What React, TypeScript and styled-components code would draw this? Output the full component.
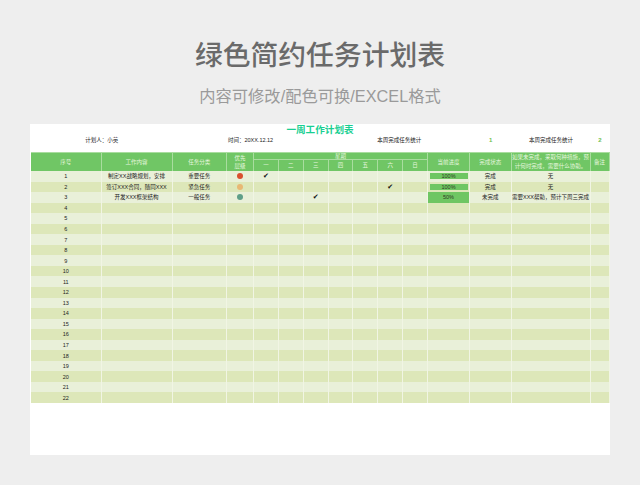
import React from "react";
import styled, { createGlobalStyle } from "styled-components";

const Global = createGlobalStyle`
  html, body { margin: 0; padding: 0; background: #eeeeee; }
  body { font-family: "Liberation Sans", "Noto Sans CJK SC", sans-serif; }
`;

const Page = styled.div`
  width: 640px;
  height: 485px;
  overflow: hidden;
  background: #eeeeee;
  display: flex;
  flex-direction: column;
  align-items: center;
`;

const Heading = styled.h1`
  margin: 34px 0 0;
  height: 44px;
  line-height: 44px;
  font-size: 27.8px;
  font-weight: 500;
  color: #6a6a6a;
`;

const SubHeading = styled.h2`
  margin: 6px 0 0;
  height: 24px;
  line-height: 24px;
  font-size: 16.3px;
  font-weight: 400;
  color: #9a9a9a;
`;

const Sheet = styled.section`
  margin-top: 16px;
  width: 580px;
  height: 331px;
  background: #ffffff;
  padding: 0 1px;
  box-sizing: border-box;
  display: flex;
  flex-direction: column;
`;

const SheetTitle = styled.div`
  height: 10px;
  line-height: 11px;
  text-align: center;
  font-size: 9.6px;
  font-weight: 700;
  color: #19cf92;
`;

const columns = "70.5px 71px 54.5px 27px repeat(7, 24.86px) 42px 41.5px 79px 19px";

const InfoRow = styled.div`
  height: 17.5px;
  padding-bottom: 5.5px;
  box-sizing: border-box;
  display: grid;
  grid-template-columns: ${columns};
  align-items: center;
`;

const Info = styled.div<{ $span: number; $accent?: boolean }>`
  grid-column: span ${(p) => p.$span};
  text-align: center;
  font-size: ${(p) => (p.$accent ? "6px" : "5.5px")};
  font-weight: ${(p) => (p.$accent ? 700 : 400)};
  color: ${(p) => (p.$accent ? "#6cc04f" : "#222222")};
`;

const Grid = styled.div`
  display: grid;
  grid-template-columns: ${columns};
  grid-template-rows: 7px 12.5px;
  grid-auto-rows: 10.55px;
`;

const HeadCell = styled.div<{ $rows?: number; $span?: number; $tight?: boolean }>`
  grid-row: span ${(p) => p.$rows ?? 1};
  grid-column: span ${(p) => p.$span ?? 1};
  background: #70c665;
  color: #e6f6df;
  box-sizing: border-box;
  border-right: 1px solid #a9dd9f;
  border-top: 1px solid #a9dd9f;
  display: flex;
  align-items: center;
  justify-content: center;
  text-align: center;
  font-size: 5.5px;
  line-height: ${(p) => (p.$tight ? "8.5px" : "8px")};
  overflow: hidden;
`;

const Cell = styled.div<{ $even: boolean }>`
  background: ${(p) => (p.$even ? "#dde7b9" : "#e9f0d9")};
  color: #222222;
  box-sizing: border-box;
  border-right: 1px solid #f1f5e4;
  display: flex;
  align-items: center;
  justify-content: center;
  white-space: nowrap;
  font-size: 5.5px;
  line-height: 10px;
  overflow: hidden;
`;

const Dot = styled.span<{ $color: string }>`
  flex: none;
  width: 6.2px;
  height: 6.2px;
  border-radius: 50%;
  background: ${(p) => p.$color};
`;

const Check = styled.span`
  font-family: "DejaVu Sans", sans-serif;
  font-size: 7px;
  color: #111111;
`;

const Bar = styled.div<{ $full: boolean }>`
  background: #6fc663;
  color: #2f3a22;
  display: flex;
  align-items: center;
  justify-content: center;
  width: ${(p) => (p.$full ? "100%" : "38px")};
  height: ${(p) => (p.$full ? "100%" : "6px")};
`;

type Row = {
  work?: string;
  kind?: string;
  dot?: string;
  day?: number;
  progress?: string;
  state?: string;
  help?: string;
};

const data: Row[] = [
  { work: "制定XX战略规划，安排", kind: "重要任务", dot: "#d9502e", day: 0, progress: "100%", state: "完成", help: "无" },
  { work: "签订XXX合同，随同XXX", kind: "紧急任务", dot: "#e8b874", day: 5, progress: "100%", state: "完成", help: "无" },
  { work: "开发XXX框架结构", kind: "一般任务", dot: "#5f9f88", day: 2, progress: "50%", state: "未完成", help: "需要XXX帮助，预计下周三完成" },
];
const rows: Row[] = Array.from({ length: 22 }, (_, i) => data[i] ?? {});
const days = ["一", "二", "三", "四", "五", "六", "日"];

export default function App() {
  return (
    <Page>
      <Global />
      <Heading>绿色简约任务计划表</Heading>
      <SubHeading>内容可修改/配色可换/EXCEL格式</SubHeading>
      <Sheet>
        <SheetTitle>一周工作计划表</SheetTitle>
        <InfoRow>
          <Info $span={2}>计划人：小英</Info>
          <Info $span={5}>时间：20XX.12.12</Info>
          <Info $span={5}>本周完成任务统计</Info>
          <Info $span={1} $accent>1</Info>
          <Info $span={1}>本周完成任务统计</Info>
          <Info $span={1} $accent>2</Info>
        </InfoRow>
        <Grid>
          <HeadCell $rows={2}>序号</HeadCell>
          <HeadCell $rows={2}>工作内容</HeadCell>
          <HeadCell $rows={2}>任务分类</HeadCell>
          <HeadCell $rows={2}>优先<br />层级</HeadCell>
          <HeadCell $span={7}>星期</HeadCell>
          <HeadCell $rows={2}>当前进度</HeadCell>
          <HeadCell $rows={2}>完成状态</HeadCell>
          <HeadCell $rows={2} $tight>如果未完成，采取何种措施，预计何时完成，需要什么协助。</HeadCell>
          <HeadCell $rows={2}>备注</HeadCell>
          {days.map((d) => (
            <HeadCell key={d}>{d}</HeadCell>
          ))}
          {rows.map((r, i) => {
            const even = i % 2 === 1;
            return (
              <React.Fragment key={i}>
                <Cell $even={even}>{i + 1}</Cell>
                <Cell $even={even}>{r.work}</Cell>
                <Cell $even={even}>{r.kind}</Cell>
                <Cell $even={even}>{r.dot && <Dot $color={r.dot} />}</Cell>
                {days.map((d, j) => (
                  <Cell $even={even} key={d}>{r.day === j && <Check>✔</Check>}</Cell>
                ))}
                <Cell $even={even}>
                  {r.progress && <Bar $full={r.progress === "50%"}>{r.progress}</Bar>}
                </Cell>
                <Cell $even={even}>{r.state}</Cell>
                <Cell $even={even}>{r.help}</Cell>
                <Cell $even={even} />
              </React.Fragment>
            );
          })}
        </Grid>
      </Sheet>
    </Page>
  );
}
